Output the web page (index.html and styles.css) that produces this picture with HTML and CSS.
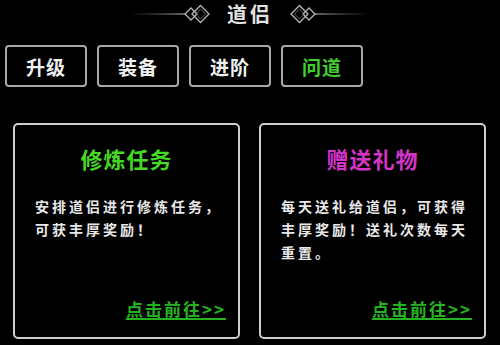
FILE: index.html
```html
<!DOCTYPE html>
<html lang="zh">
<head>
<meta charset="utf-8">
<title>道侣</title>
<link rel="stylesheet" href="styles.css">
</head>
<body>
<div class="page">
  <header class="header">
    <svg class="orn" width="80" height="20" viewBox="0 0 80 20">
      <defs>
        <linearGradient id="fadeL" x1="0" y1="0" x2="1" y2="0">
          <stop offset="0" stop-color="#888" stop-opacity="0"/>
          <stop offset="1" stop-color="#aaa" stop-opacity="1"/>
        </linearGradient>
      </defs>
      <rect x="0" y="9.4" width="56" height="1.2" fill="url(#fadeL)"/>
      <path d="M55 10 L61 4 L67 10 L61 16 Z" fill="none" stroke="#b5b5b5" stroke-width="1.3"/>
      <path d="M62 10 L70.5 1.5 L79 10 L70.5 18.5 Z" fill="none" stroke="#b5b5b5" stroke-width="1.3"/>
      <path d="M65.5 10 L70.5 5 L75.5 10 L70.5 15 Z" fill="none" stroke="#777" stroke-width="0.8"/>
    </svg>
    <h1 class="title">道侣</h1>
    <svg class="orn orn-right" width="80" height="20" viewBox="0 0 80 20">
      <defs>
        <linearGradient id="fadeR" x1="0" y1="0" x2="1" y2="0">
          <stop offset="0" stop-color="#888" stop-opacity="0"/>
          <stop offset="1" stop-color="#aaa" stop-opacity="1"/>
        </linearGradient>
      </defs>
      <rect x="0" y="9.4" width="56" height="1.2" fill="url(#fadeR)"/>
      <path d="M55 10 L61 4 L67 10 L61 16 Z" fill="none" stroke="#b5b5b5" stroke-width="1.3"/>
      <path d="M62 10 L70.5 1.5 L79 10 L70.5 18.5 Z" fill="none" stroke="#b5b5b5" stroke-width="1.3"/>
      <path d="M65.5 10 L70.5 5 L75.5 10 L70.5 15 Z" fill="none" stroke="#777" stroke-width="0.8"/>
    </svg>
  </header>

  <nav class="tabs">
    <div class="tab">升级</div>
    <div class="tab">装备</div>
    <div class="tab">进阶</div>
    <div class="tab tab-active">问道</div>
  </nav>

  <main class="cards">
    <section class="card">
      <h2 class="card-title title-green">修炼任务</h2>
      <p class="card-desc">安排道侣进行修炼任务，可获丰厚奖励！</p>
      <a class="card-link">点击前往&gt;&gt;</a>
    </section>
    <section class="card">
      <h2 class="card-title title-pink">赠送礼物</h2>
      <p class="card-desc">每天送礼给道侣，可获得丰厚奖励！送礼次数每天重置。</p>
      <a class="card-link">点击前往&gt;&gt;</a>
    </section>
  </main>
</div>
</body>
</html>
```

FILE: styles.css
```css
html, body {
  margin: 0;
  padding: 0;
  background: #000;
}

.page {
  width: 500px;
  height: 345px;
  overflow: hidden;
  background: #000;
  font-family: "Noto Sans CJK SC", "Noto Sans", sans-serif;
  color: #e6e6e6;
}

.header {
  height: 28px;
  display: flex;
  align-items: center;
  justify-content: center;
  gap: 17px;
}

.orn {
  display: block;
  flex: none;
}

.orn-right {
  transform: scaleX(-1);
}

.title {
  margin: 0;
  font-size: 20px;
  line-height: 24px;
  font-weight: 700;
  letter-spacing: 3px;
  color: #e2e2e2;
}

.tabs {
  display: flex;
  gap: 10px;
  padding-left: 5px;
  margin-top: 17px;
}

.tab {
  width: 82px;
  height: 42px;
  box-sizing: border-box;
  border: 2px solid #a8a8a8;
  border-radius: 4px;
  display: flex;
  align-items: center;
  justify-content: center;
  font-size: 19px;
  font-weight: 700;
  letter-spacing: 1px;
  color: #f0f0f0;
}

.tab-active {
  color: #3fd12c;
}

.cards {
  display: flex;
  gap: 19px;
  padding-left: 13px;
  margin-top: 36px;
}

.card {
  width: 227px;
  height: 216px;
  box-sizing: border-box;
  border: 2px solid #cfcfcf;
  border-radius: 5px;
  display: flex;
  flex-direction: column;
}

.card-title {
  margin: 20px 0 0;
  text-align: center;
  font-size: 22px;
  line-height: 26px;
  font-weight: 700;
  letter-spacing: 1px;
}

.title-green {
  color: #45d825;
}

.title-pink {
  color: #d435c8;
}

.card-desc {
  margin: 24px 0 0;
  padding: 0 14px 0 20px;
  font-size: 14px;
  line-height: 23px;
  font-weight: 700;
  letter-spacing: 3px;
  color: #e8e8e8;
}

.card-link {
  margin-top: auto;
  margin-bottom: 18px;
  padding-right: 12px;
  align-self: flex-end;
  font-size: 17px;
  line-height: 20px;
  font-weight: 700;
  letter-spacing: 2px;
  color: #25b322;
  text-decoration: underline;
  text-decoration-thickness: 2px;
  text-underline-offset: 2px;
}
```
